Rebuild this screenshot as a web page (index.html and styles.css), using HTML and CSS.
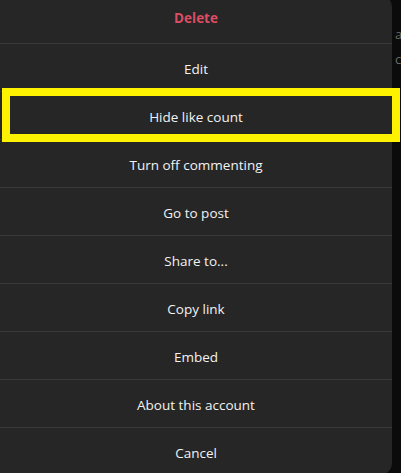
FILE: index.html
```html
<!DOCTYPE html>
<html lang="en">
<head>
    <meta charset="UTF-8">
    <meta name="viewport" content="width=device-width, initial-scale=1.0">
    <title>Post options</title>
    <link rel="stylesheet" href="styles.css">
</head>
<body>
    <div class="page">
        <div class="sheet">
            <button class="option danger">Delete</button>
            <button class="option">Edit</button>
            <button class="option">Hide like count</button>
            <button class="option">Turn off commenting</button>
            <button class="option">Go to post</button>
            <button class="option">Share to...</button>
            <button class="option">Copy link</button>
            <button class="option">Embed</button>
            <button class="option">About this account</button>
            <button class="option">Cancel</button>
        </div>
        <div class="behind">
            <span>a</span>
            <span>c</span>
        </div>
        <!-- annotation box drawn over the menu -->
        <div class="highlight"></div>
    </div>
</body>
</html>
```

FILE: styles.css
```css
/* Base Styles */
body {
    margin: 0;
    padding: 0;
    background-color: #0b0b0b;
    font-family: "Open Sans", "Noto Sans", Arial, sans-serif;
    overflow: hidden;
}

.page {
    position: relative;
    display: flex;
    width: 401px;
    height: 473px;
}

.sheet {
    display: flex;
    flex-direction: column;
    width: 392px;
    margin-top: -5px;
    background-color: #262626;
    border-radius: 0 12px 12px 0;
    overflow: hidden;
    flex-shrink: 0;
    align-self: flex-start;
}

.option {
    height: 48px;
    box-sizing: border-box;
    border: none;
    border-top: 1px solid #383838;
    background: transparent;
    color: #f2f2f2;
    font-family: inherit;
    font-size: 13.5px;
    padding: 2px 0 0;
    cursor: pointer;
}

.option:first-child {
    border-top: none;
    padding: 0 0 2px;
}

.danger {
    color: #dc4d62;
    font-weight: bold;
}

.behind {
    display: flex;
    flex-direction: column;
    gap: 10px;
    padding-top: 27px;
    padding-left: 3px;
    color: #6a6a6a;
    font-size: 13px;
    line-height: 15px;
    overflow: hidden;
}

.highlight {
    position: absolute;
    left: 2px;
    top: 88px;
    width: 398px;
    height: 54px;
    box-sizing: border-box;
    border: 8px solid #fff200;
}
```
